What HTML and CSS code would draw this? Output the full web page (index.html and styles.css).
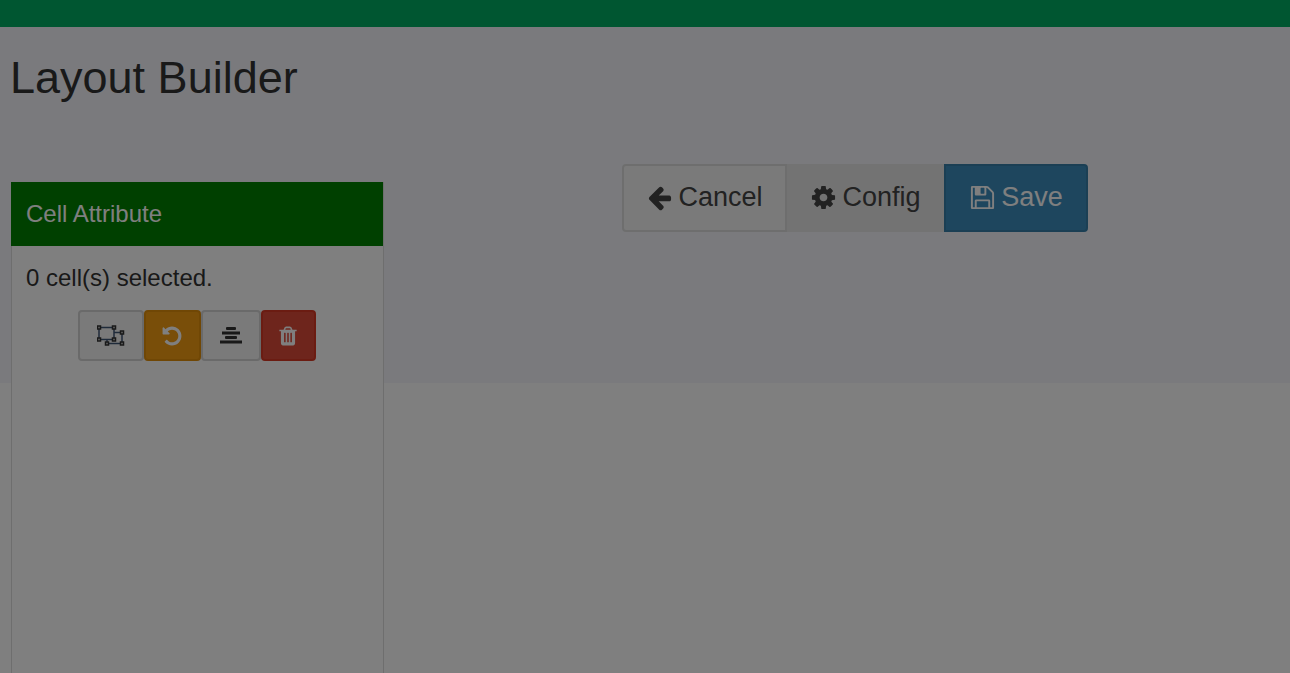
FILE: index.html
```html
<!DOCTYPE html>
<html lang="en">
  <head>
    <meta charset="utf-8" />
    <title>Layout Builder</title>
    <link rel="stylesheet" href="styles.css">
  </head>
  <body>
    <div class="topbar"></div>
    <div class="page">
      <h1 class="page-title">Layout Builder</h1>
      <div class="builder">
        <div class="panel">
          <div class="panel-heading">Cell Attribute</div>
          <div class="panel-body">
            <p class="selected-count">0 cell(s) selected.</p>
            <div class="cell-tools">
              <button class="tool tool-default tool-merge">
                <svg class="icon-merge" viewBox="0 0 28 22" width="28" height="22">
                  <rect x="2" y="2.500" width="15" height="12" fill="none" stroke="#3f5675" stroke-width="1.500"/>
                  <path d="M17 7.500h8v11h-15v-4" fill="none" stroke="#3f5675" stroke-width="1.500"/>
                  <g class="handles">
                    <rect x="0.500" y="1" width="3" height="3"/>
                    <rect x="15.500" y="1" width="3" height="3"/>
                    <rect x="0.500" y="13" width="3" height="3"/>
                    <rect x="15.500" y="13" width="3" height="3"/>
                    <rect x="23.500" y="6" width="3" height="3"/>
                    <rect x="23.500" y="17" width="3" height="3"/>
                    <rect x="8.500" y="17" width="3" height="3"/>
                  </g>
                </svg>
              </button>
              <button class="tool tool-warning">
                <svg viewBox="0 0 1792 1792" width="22" height="22" fill="currentColor"><path d="M1664 896q0 156-61 298t-164 245-245 164-298 61q-172 0-327-72.500t-264-204.500q-7-10-6.500-22.500t8.500-20.500l137-138q10-9 25-9 16 2 23 12 73 95 179 147t225 52q104 0 198.500-40.500t163.500-109.500 109.500-163.500 40.500-198.500-40.500-198.500-109.500-163.500-163.500-109.500-198.500-40.500q-98 0-188 35.500t-160 101.500l137 138q31 30 14 69-17 40-59 40h-448q-26 0-45-19t-19-45v-448q0-42 40-59 39-17 69 14l130 129q107-101 244.500-156.500t284.500-55.500q156 0 298 61t245 164 164 245 61 298z"/></svg>
              </button>
              <button class="tool tool-default">
                <svg viewBox="0 0 22 17" width="22" height="17" fill="#333">
                  <rect x="6" y="0" width="10" height="3" rx="1"/>
                  <rect x="2" y="4.500" width="18" height="3"/>
                  <rect x="5" y="9" width="12" height="3" rx="1"/>
                  <rect x="0" y="13.500" width="22" height="3"/>
                </svg>
              </button>
              <button class="tool tool-danger">
                <svg viewBox="0 0 1792 1792" width="22" height="22" fill="currentColor"><path d="M704 1376v-704q0-14-9-23t-23-9h-64q-14 0-23 9t-9 23v704q0 14 9 23t23 9h64q14 0 23-9t9-23zm256 0v-704q0-14-9-23t-23-9h-64q-14 0-23 9t-9 23v704q0 14 9 23t23 9h64q14 0 23-9t9-23zm256 0v-704q0-14-9-23t-23-9h-64q-14 0-23 9t-9 23v704q0 14 9 23t23 9h64q14 0 23-9t9-23zm-544-992h448l-48-117q-7-9-17-11h-317q-10 2-17 11zm928 32v64q0 14-9 23t-23 9h-96v948q0 83-47 143.500t-113 60.500h-832q-66 0-113-58.500t-47-141.500v-952h-96q-14 0-23-9t-9-23v-64q0-14 9-23t23-9h309l70-167q15-37 54-63t79-26h320q40 0 79 26t54 63l70 167h309q14 0 23 9t9 23z"/></svg>
              </button>
            </div>
          </div>
        </div>
        <div class="actions">
          <div class="btn-group">
            <button class="btn btn-cancel">
              <svg viewBox="0 0 1792 1792" width="27" height="27" fill="currentColor"><path d="M1664 896v128q0 53-32.500 90.500t-84.500 37.500h-704l293 294q38 36 38 90t-38 90l-75 76q-37 37-90 37-52 0-91-37l-651-652q-37-37-37-90 0-52 37-91l651-650q38-38 91-38 52 0 90 38l75 74q38 38 38 91t-38 91l-293 293h704q52 0 84.500 37.500t32.500 90.500z"/></svg>
              Cancel
            </button>
            <button class="btn btn-config">
              <svg viewBox="0 0 1792 1792" width="27" height="27" fill="currentColor"><path d="M1152 896q0-106-75-181t-181-75-181 75-75 181 75 181 181 75 181-75 75-181zm512-109v222q0 12-8 23t-20 13l-185 28q-19 54-39 91 35 50 107 138 10 12 10 25t-9 23q-27 37-99 108t-94 71q-12 0-26-9l-138-108q-44 23-91 38-16 136-29 186-7 28-36 28h-222q-14 0-24.500-8.500t-11.500-21.500l-28-184q-49-16-90-37l-141 107q-10 9-25 9-14 0-25-11-126-114-165-168-7-10-7-23 0-12 8-23 15-21 51-66.500t54-70.500q-27-50-41-99l-183-27q-13-2-21-12.500t-8-23.500v-222q0-12 8-23t19-13l186-28q14-46 39-92-40-57-107-138-10-12-10-24 0-10 9-23 26-36 98.500-107.500t94.500-71.500q13 0 26 10l138 107q44-23 91-38 16-136 29-186 7-28 36-28h222q14 0 24.500 8.500t11.500 21.500l28 184q49 16 90 37l142-107q9-9 24-9 13 0 25 10 129 119 165 170 7 8 7 22 0 12-8 23-15 21-51 66.500t-54 70.500q26 50 41 98l183 28q13 2 21 12.500t8 23.500z"/></svg>
              Config
            </button>
            <button class="btn btn-save">
              <svg viewBox="0 0 1792 1792" width="27" height="27" fill="currentColor"><path d="M512 1536h768v-384h-768v384zm896 0h128v-896q0-14-10-38.500t-20-34.500l-281-281q-10-10-34-20t-39-10v416q0 40-28 68t-68 28h-576q-40 0-68-28t-28-68v-416h-128v1280h128v-416q0-40 28-68t68-28h832q40 0 68 28t28 68v416zm-384-928v-320q0-13-9.500-22.500t-22.500-9.500h-192q-13 0-22.500 9.500t-9.500 22.500v320q0 13 9.500 22.500t22.500 9.500h192q13 0 22.500-9.500t9.500-22.500zm640 32v928q0 40-28 68t-68 28h-1344q-40 0-68-28t-28-68v-1344q0-40 28-68t68-28h928q40 0 88 20t76 48l280 280q28 28 48 76t20 88z"/></svg>
              Save
            </button>
          </div>
        </div>
      </div>
    </div>
    <div class="backdrop"></div>
  </body>
</html>
```

FILE: styles.css
```css
html, body {
  height: 100%;
  margin: 0;
  overflow: hidden;
}
body {
  background-color: #fff;
  color: #333;
  font-family: "Liberation Sans", Arial, sans-serif;
  font-size: 24px;
  line-height: 1.43;
}
.backdrop {
  position: fixed;
  top: 0;
  left: 0;
  right: 0;
  bottom: 0;
  background-color: #000;
  opacity: .5;
}
.topbar {
  height: 27px;
  background-color: #00ac62;
}
.page {
  height: calc(100% - 27px);
  padding: 0 0 0 10px;
  box-sizing: border-box;
  overflow: hidden;
  background: linear-gradient(#f4f5fb 356px, #fff 356px);
}
.page-title {
  margin: 0;
  padding-top: 26px;
  height: 133px;
  box-sizing: border-box;
  font-size: 45px;
  font-weight: 400;
  line-height: 1.1;
}
.builder {
  display: flex;
  align-items: flex-start;
}
.panel {
  width: 373px;
  height: 520px;
  margin-top: 22px;
  margin-left: 1px;
  flex: none;
  box-sizing: border-box;
  background-color: #fff;
  border: 1px solid #ddd;
  border-top: 0;
  border-bottom: 0;
}
.panel-heading {
  height: 64px;
  margin-left: -1px;
  padding: 0 15px;
  display: flex;
  align-items: center;
  background-color: #008000;
  color: #fff;
}
.panel-body {
  padding: 16px 14px;
}
.selected-count {
  margin: 0 0 17px;
  line-height: 31px;
}
.cell-tools {
  display: flex;
  justify-content: center;
  margin-left: -2px;
}
.tool {
  height: 51px;
  padding: 0;
  display: flex;
  align-items: center;
  justify-content: center;
  border: 2px solid #d4d4d4;
  border-radius: 4px;
  background-color: #f4f4f4;
  color: #fff;
}
.tool-default {
  width: 60px;
}
.tool-merge {
  width: 66px;
}
.tool-warning {
  width: 57px;
  background-color: #f39c12;
  border-color: #e08e0b;
}
.tool-danger {
  width: 55px;
  background-color: #dd4b39;
  border-color: #d73925;
}
.handles rect {
  fill: #ccc;
  stroke: #333;
  stroke-width: 1.500;
}
.actions {
  margin-top: 4px;
  margin-left: 238px;
}
.btn-group {
  display: flex;
  height: 68px;
}
.btn {
  display: flex;
  align-items: center;
  justify-content: center;
  gap: 5px;
  padding: 0 0 2px;
  font-family: inherit;
  font-size: 27px;
  color: #444;
  border: 2px solid #ddd;
  background-color: #f4f4f4;
}
.btn-cancel {
  width: 165px;
  border-radius: 4px 0 0 4px;
}
.btn-config {
  width: 157px;
  background-color: #e7e7e7;
  border-color: #e7e7e7;
}
.btn-save {
  width: 144px;
  background-color: #3c8dbc;
  border-color: #367fa9;
  border-radius: 0 4px 4px 0;
  color: #fff;
}
```
